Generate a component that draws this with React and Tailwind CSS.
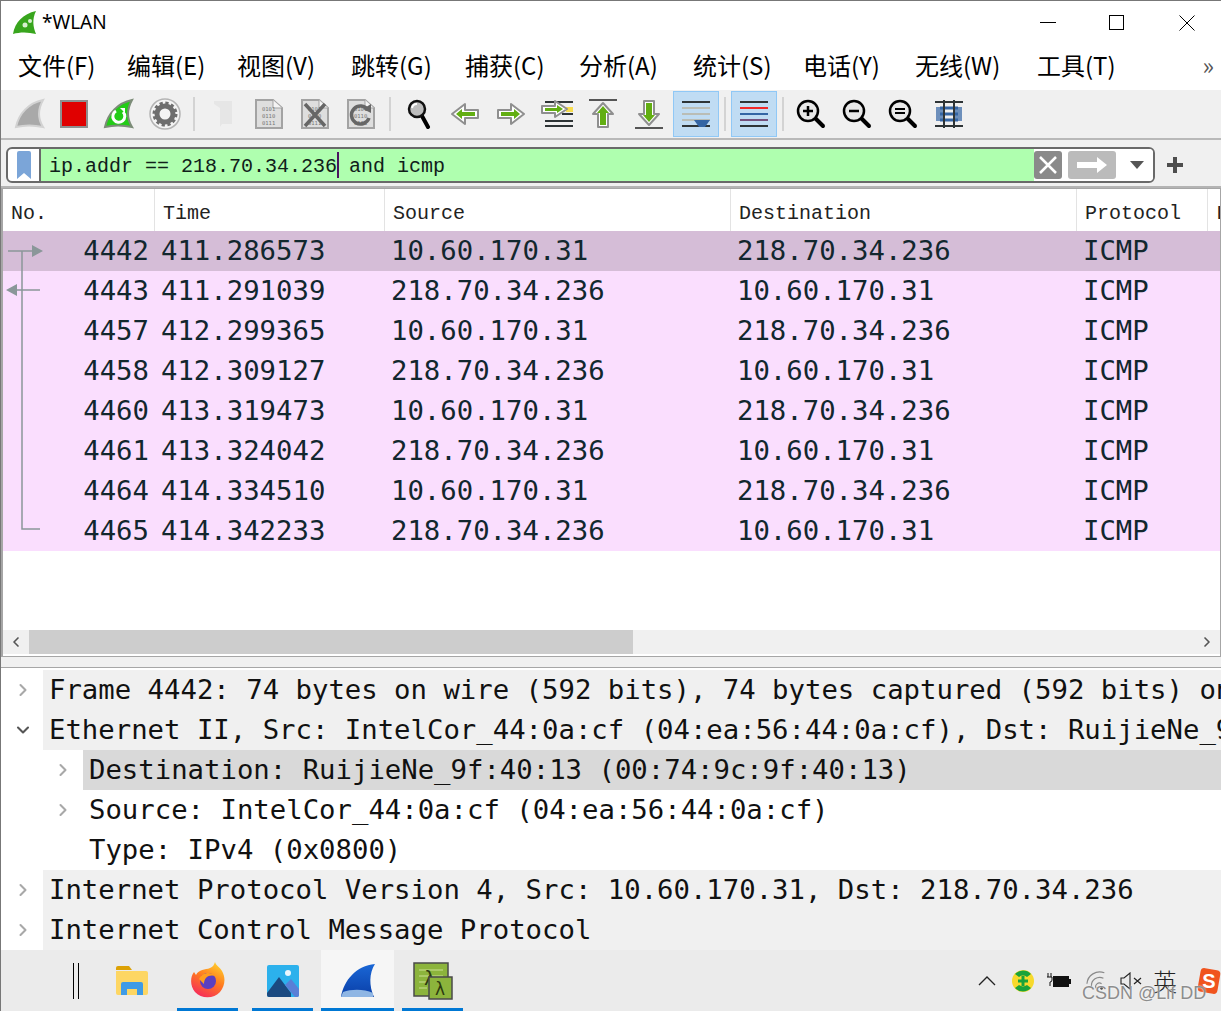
import { ChevronDown, ChevronLeft, ChevronRight } from "lucide-react";

const menus = [
  ["文件(F)", "w-[109px]"],
  ["编辑(E)", "w-[110px]"],
  ["视图(V)", "w-[114px]"],
  ["跳转(G)", "w-[114px]"],
  ["捕获(C)", "w-[114px]"],
  ["分析(A)", "w-[114px]"],
  ["统计(S)", "w-[110px]"],
  ["电话(Y)", "w-[112px]"],
  ["无线(W)", "w-[122px]"],
  ["工具(T)", "w-[80px]"],
];

const packets = [
  ["4442", "411.286573", "10.60.170.31", "218.70.34.236"],
  ["4443", "411.291039", "218.70.34.236", "10.60.170.31"],
  ["4457", "412.299365", "10.60.170.31", "218.70.34.236"],
  ["4458", "412.309127", "218.70.34.236", "10.60.170.31"],
  ["4460", "413.319473", "10.60.170.31", "218.70.34.236"],
  ["4461", "413.324042", "218.70.34.236", "10.60.170.31"],
  ["4464", "414.334510", "10.60.170.31", "218.70.34.236"],
  ["4465", "414.342233", "218.70.34.236", "10.60.170.31"],
];

const FIN = "M2 29 C5 15 15 5 29 2 C24 11 24 21 29 29 C20 27 10 27 2 29 Z";

function Fin({ fill, stroke, children }) {
  return (
    <svg width="32" height="32" viewBox="0 0 32 32">
      <path d={FIN} fill={fill} stroke={stroke} strokeWidth="2" />
      {children}
    </svg>
  );
}

function DataFile({ children }) {
  return (
    <svg width="30" height="32" viewBox="0 0 30 32">
      <path d="M2 2 H19 L28 10 V30 H2 Z" fill="#dedede" stroke="#a3a3a3" strokeWidth="2" />
      <path d="M19 2 V10 H28" fill="#f4f4f4" stroke="#a3a3a3" strokeWidth="1" />
      <text x="8" y="13" fontSize="5.5" fill="#777" fontFamily="DejaVu Sans Mono">0101</text>
      <text x="8" y="20" fontSize="5.5" fill="#777" fontFamily="DejaVu Sans Mono">0110</text>
      <text x="8" y="27" fontSize="5.5" fill="#777" fontFamily="DejaVu Sans Mono">0111</text>
      {children}
    </svg>
  );
}

function Arrow({ rotate = 0, size = 30 }) {
  return (
    <svg width={size} height={size} viewBox="0 0 30 30" style={{ transform: `rotate(${rotate}deg)` }}>
      <path d="M2 11 H15 V5 L28 15 L15 25 V19 H2 Z" fill="#fff" stroke="#8f8f8f" strokeWidth="2" strokeLinejoin="round" />
      <path d="M5 13 H18 V10 L24 15 L18 20 V17 H5 Z" fill="#62ae12" />
    </svg>
  );
}

function GoToIcon() {
  return (
    <svg width="34" height="32" viewBox="0 0 34 32">
      <rect x="5" y="3" width="28" height="2" fill="#2e3436" />
      <rect x="26" y="9" width="7" height="5" fill="#f7dc4d" />
      <rect x="22" y="15" width="11" height="2" fill="#2e3436" />
      <rect x="5" y="22" width="28" height="2" fill="#2e3436" />
      <rect x="5" y="27" width="28" height="2" fill="#2e3436" />
      <path d="M2 8 H15 V3 L27 11 L15 19 V15 H2 Z" fill="#fff" stroke="#8f8f8f" strokeWidth="2" strokeLinejoin="round" />
      <path d="M5 10 H17 V7 L23 11 L17 15 V13 H5 Z" fill="#62ae12" />
    </svg>
  );
}

function EdgeArrow({ up }) {
  return (
    <svg width="30" height="32" viewBox="0 0 30 32">
      <rect x="1" y={up ? 1 : 29} width="28" height="2" fill="#555" />
      <path
        d={up ? "M15 5 L25 16 H20 V29 H10 V16 H5 Z" : "M15 27 L25 16 H20 V3 H10 V16 H5 Z"}
        fill="#fff"
        stroke="#8f8f8f"
        strokeWidth="2"
        strokeLinejoin="round"
      />
      <path
        d={up ? "M15 8 L21 15 H18 V27 H12 V15 H9 Z" : "M15 24 L21 17 H18 V5 H12 V17 H9 Z"}
        fill="#62ae12"
      />
    </svg>
  );
}

function Lines({ children }) {
  return (
    <svg width="28" height="28" viewBox="0 0 28 28">
      {children}
    </svg>
  );
}

function Magnifier({ sign }) {
  return (
    <svg width="30" height="30" viewBox="0 0 30 30">
      <path d="M19 19 L27 27" stroke="#000" strokeWidth="4" strokeLinecap="round" />
      <circle cx="12" cy="12" r="10" fill="#e8e8e8" stroke="#000" strokeWidth="2.5" />
      {sign !== "normal" && <path d="M7 12 H17" stroke="#000" strokeWidth="2.5" />}
      {sign === "plus" && <path d="M12 7 V17" stroke="#000" strokeWidth="2.5" />}
      {sign === "normal" && <path d="M7 10 H17 M7 14 H17" stroke="#000" strokeWidth="2" />}
    </svg>
  );
}

function ToolButton({ children, className = "w-[46px]" }) {
  return <div className={`flex h-[46px] shrink-0 items-center justify-center ${className}`}>{children}</div>;
}

function Separator({ className = "w-3" }) {
  return (
    <div className={`flex h-[34px] shrink-0 items-center justify-center ${className}`}>
      <div className="h-full w-0.5 bg-[#d3d3d3]" />
    </div>
  );
}

function Toolbar() {
  return (
    <div className="flex h-[50px] items-center border-b-2 border-[#b9b9b9] bg-[#f0f0f0] pl-[7px]">
      <ToolButton className="w-11">
        <Fin fill="#a9a9a9" stroke="#d2d2d2" />
      </ToolButton>
      <ToolButton className="w-11">
        <div className="h-7 w-7 border-2 border-[#8f8f8f] bg-[#e00000]" />
      </ToolButton>
      <ToolButton>
        <Fin fill="#22cc16" stroke="#7c8c78">
          <path d="M20 14 a6 6 0 1 1 -7 -1" fill="none" stroke="#fff" strokeWidth="3" />
          <path d="M17 10 h5 v5 Z" fill="#fff" />
        </Fin>
      </ToolButton>
      <ToolButton>
        <svg width="32" height="32" viewBox="0 0 32 32">
          <circle cx="16" cy="16" r="15" fill="#f4f4f4" stroke="#b4b4b4" strokeWidth="1.5" />
          <circle cx="16" cy="16" r="8" fill="none" stroke="#6e6e6e" strokeWidth="5" />
          <circle cx="16" cy="16" r="11" fill="none" stroke="#6e6e6e" strokeWidth="3" strokeDasharray="3.2 2.56" />
        </svg>
      </ToolButton>
      <Separator />
      <ToolButton>
        <svg width="20" height="28" viewBox="0 0 20 28">
          <path d="M1 1 H19 V24 H9 L7 27 V8 L1 4 Z" fill="#e6e6e6" />
        </svg>
      </ToolButton>
      <ToolButton>
        <DataFile />
      </ToolButton>
      <ToolButton>
        <DataFile>
          <path d="M5 6 L25 28 M25 6 L5 28" stroke="#666" strokeWidth="3.5" />
        </DataFile>
      </ToolButton>
      <ToolButton>
        <DataFile>
          <path d="M22 12 a9 9 0 1 0 1 8" fill="none" stroke="#666" strokeWidth="3.5" />
          <path d="M17 11 L25 6 L25 15 Z" fill="#666" />
        </DataFile>
      </ToolButton>
      <Separator />
      <ToolButton>
        <svg width="24" height="30" viewBox="0 0 24 30">
          <path d="M15 17 L21 28" stroke="#000" strokeWidth="4" strokeLinecap="round" />
          <circle cx="10" cy="10" r="8" fill="#bdbdbd" stroke="#111" strokeWidth="2.5" />
          <path d="M5 9 a5 5 0 0 1 5 -4" fill="none" stroke="#fff" strokeWidth="2" />
        </svg>
      </ToolButton>
      <ToolButton>
        <Arrow rotate={180} />
      </ToolButton>
      <ToolButton>
        <Arrow />
      </ToolButton>
      <ToolButton>
        <GoToIcon />
      </ToolButton>
      <ToolButton>
        <EdgeArrow up />
      </ToolButton>
      <ToolButton>
        <EdgeArrow />
      </ToolButton>
      <ToolButton className="ml-px w-[46px] border border-[#90c8f6] bg-[#c0dcf3]">
        <Lines>
          <rect y="1" width="28" height="2" fill="#2e3436" />
          <rect y="7" width="28" height="2" fill="#babdb6" />
          <rect y="13" width="28" height="2" fill="#babdb6" />
          <rect y="19" width="28" height="2" fill="#babdb6" />
          <rect y="25" width="28" height="2" fill="#2e3436" />
          <path d="M12 20 H28 L23 27 H17 Z" fill="#3465a4" />
        </Lines>
      </ToolButton>
      <Separator className="w-3" />
      <ToolButton className="w-[46px] border border-[#90c8f6] bg-[#c0dcf3]">
        <Lines>
          <rect y="1" width="28" height="2" fill="#2e3436" />
          <rect y="7" width="28" height="2" fill="#ef2929" />
          <rect y="13" width="28" height="2" fill="#3465a4" />
          <rect y="19" width="28" height="2" fill="#75507b" />
          <rect y="25" width="28" height="2" fill="#2e3436" />
        </Lines>
      </ToolButton>
      <Separator className="w-[11px]" />
      <ToolButton>
        <Magnifier sign="plus" />
      </ToolButton>
      <ToolButton>
        <Magnifier sign="minus" />
      </ToolButton>
      <ToolButton>
        <Magnifier sign="normal" />
      </ToolButton>
      <ToolButton>
        <svg width="30" height="30" viewBox="0 0 30 30">
          <path d="M1 3 H29 M1 27 H29" stroke="#2e3436" strokeWidth="2" />
          <path d="M6 9 H24 M6 15 H24 M6 21 H24" stroke="#3465a4" strokeWidth="3" />
          <path d="M2 8 H9 V22 H2 Z M21 8 H28 V22 H21 Z" fill="#3465a4" opacity="0.7" />
          <path d="M10 1 V29 M20 1 V29" stroke="#2e3436" strokeWidth="2" />
        </svg>
      </ToolButton>
    </div>
  );
}

function FilterBar() {
  return (
    <div className="flex h-[48px] items-center border-b-2 border-[#b4b4b4] bg-[#f0f0f0] pt-1 pl-[5px]">
      <div className="flex h-9 w-[1149px] items-stretch overflow-hidden rounded-md border-2 border-[#696969] bg-white">
        <div className="flex w-[33px] items-center justify-center border-r-2 border-[#696969]">
          <svg width="16" height="29" viewBox="0 0 16 29">
            <path d="M1 2 Q1 0 3 0 H13 Q15 0 15 2 V28 L8 22 L1 28 Z" fill="#7ba5d8" />
          </svg>
        </div>
        <div className="flex flex-1 items-center bg-[#afffaf] pt-1 pl-2 font-['Liberation_Mono',monospace] text-[20px] whitespace-pre text-[#10201a]">
          <span>ip.addr == 218.70.34.236</span>
          <span className="-mt-1 h-[26px] w-0.5 bg-[#4b1460]" />
          <span className="-ml-0.5"> and icmp</span>
        </div>
        <div className="flex w-[119px] items-center bg-white">
          <div className="flex h-7 w-7 items-center justify-center rounded-[3px] bg-[#8a8a8a]">
            <svg width="22" height="22" viewBox="0 0 22 22">
              <path d="M3 3 L19 19 M19 3 L3 19" stroke="#fff" strokeWidth="2.5" />
            </svg>
          </div>
          <div className="ml-1.5 flex h-7 w-12 items-center justify-center rounded-[3px] bg-[#bbbbbb]">
            <svg width="34" height="20" viewBox="0 0 34 20">
              <path d="M2 7 H22 V2 L32 10 L22 18 V13 H2 Z" fill="#fff" />
            </svg>
          </div>
          <svg className="ml-3.5" width="14" height="8" viewBox="0 0 14 8">
            <path d="M0 0 H14 L7 8 Z" fill="#555" />
          </svg>
        </div>
      </div>
      <svg className="ml-[12px]" width="16" height="16" viewBox="0 0 16 16">
        <path d="M8 0 V16 M0 8 H16" stroke="#4d4d4d" strokeWidth="4" />
      </svg>
    </div>
  );
}

function PacketRow({ packet, selected }) {
  return (
    <div className={`flex h-10 items-center ${selected ? "bg-[#d5bdd7]" : "bg-[#fadefe]"}`}>
      <div className="w-[147px] shrink-0 pr-px text-right">{packet[0]}</div>
      <div className="w-[234px] shrink-0 pl-[11px]">{packet[1]}</div>
      <div className="w-[346px] shrink-0 pl-[7px]">{packet[2]}</div>
      <div className="w-[346px] shrink-0 pl-[7px]">{packet[3]}</div>
      <div className="pl-[7px]">ICMP</div>
    </div>
  );
}

function PacketList() {
  const headerCell = "flex h-full shrink-0 items-center border-r border-[#e3e3e3] pt-[7px] pl-2";
  return (
    <div className="relative flex h-[469px] flex-col border border-l-2 border-[#a6a6a6] bg-white">
      <div className="flex h-[42px] shrink-0 items-center overflow-hidden font-['Liberation_Mono',monospace] text-[20px] text-[#222]">
        <div className={`${headerCell} w-[152px]`}>No.</div>
        <div className={`${headerCell} w-[230px]`}>Time</div>
        <div className={`${headerCell} w-[346px]`}>Source</div>
        <div className={`${headerCell} w-[346px]`}>Destination</div>
        <div className={`${headerCell} w-[131px]`}>Protocol</div>
        <div className="shrink-0 pt-[7px] pl-2">L</div>
      </div>
      <div className="font-['DejaVu_Sans_Mono',monospace] text-[27.3px] whitespace-nowrap text-[#12272e]">
        {packets.map((packet, i) => (
          <PacketRow key={packet[0]} packet={packet} selected={i === 0} />
        ))}
      </div>
      {/* related packet markers */}
      <svg className="absolute top-[50px] left-[1px]" width="40" height="300" viewBox="0 0 40 300">
        <path d="M4 12 H28 M18 12 V290 H36 M10 51 H36" stroke="#8a9799" strokeWidth="1.5" fill="none" />
        <path d="M28 6 L39 12 L28 18 Z M13 45 L2 51 L13 57 Z" fill="#8a9799" />
      </svg>
      <div className="mt-auto mb-[2px] flex h-6 items-center bg-[#f0f0f0] text-[#555]">
        <div className="flex w-[26px] items-center justify-center">
          <ChevronLeft size={16} strokeWidth={2.5} />
        </div>
        <div className="h-full w-[604px] bg-[#cdcdcd]" />
        <div className="ml-auto flex w-[27px] items-center justify-center">
          <ChevronRight size={16} strokeWidth={2.5} />
        </div>
      </div>
    </div>
  );
}

function TreeRow({ indent, open, chevronClass = "text-[#a8a8a8]", rowClass, children }) {
  const Icon = open ? ChevronDown : ChevronRight;
  return (
    <div className={`flex h-10 ${indent ? "pl-10" : ""}`}>
      <div className={`flex w-[41px] shrink-0 items-center justify-center ${chevronClass}`}>
        {open !== undefined && <Icon size={20} strokeWidth={2.5} />}
      </div>
      <div className={`flex min-w-0 flex-1 items-center overflow-hidden whitespace-pre pl-[6px] ${rowClass}`}>
        {children}
      </div>
    </div>
  );
}

function Details() {
  return (
    <div className="flex h-[283px] flex-col overflow-hidden border-t border-[#a6a6a6] bg-white pt-[2px] pl-px font-['DejaVu_Sans_Mono',monospace] text-[27.3px] text-[#111]">
      <TreeRow open={false} rowClass="bg-[#f0f0f0]">
        Frame 4442: 74 bytes on wire (592 bits), 74 bytes captured (592 bits) on interface
      </TreeRow>
      <TreeRow open chevronClass="text-[#555]" rowClass="bg-[#f0f0f0]">
        Ethernet II, Src: IntelCor_44:0a:cf (04:ea:56:44:0a:cf), Dst: RuijieNe_9f:40:13 (00:74:9c:9f:40:13)
      </TreeRow>
      <TreeRow indent open={false} rowClass="bg-[#d9d9d9]">
        Destination: RuijieNe_9f:40:13 (00:74:9c:9f:40:13)
      </TreeRow>
      <TreeRow indent open={false} rowClass="bg-white">
        Source: IntelCor_44:0a:cf (04:ea:56:44:0a:cf)
      </TreeRow>
      <TreeRow indent rowClass="bg-white">
        Type: IPv4 (0x0800)
      </TreeRow>
      <TreeRow open={false} rowClass="bg-[#f0f0f0]">
        Internet Protocol Version 4, Src: 10.60.170.31, Dst: 218.70.34.236
      </TreeRow>
      <TreeRow open={false} rowClass="bg-[#f0f0f0]">
        Internet Control Message Protocol
      </TreeRow>
    </div>
  );
}

function TaskItem({ className, running = true, active, children }) {
  return (
    <div className={`relative flex h-full shrink-0 items-center justify-center ${active ? "bg-[#f6f6f6]" : ""} ${className}`}>
      {children}
      {running && <div className="absolute right-0 bottom-0 left-0 h-[3px] bg-[#0078d4]" />}
    </div>
  );
}

function Taskbar() {
  return (
    <div className="relative flex h-[61px] items-center bg-[#ebebeb] pl-[72px]">
      <div className="h-9 w-1.5 shrink-0 border-x border-black" />
      <TaskItem className="ml-[22px] w-[61px]" running={false}>
        <svg width="32" height="30" viewBox="0 0 32 30">
          <path d="M0 2 Q0 0 2 0 H13 L16 4 H0 Z" fill="#dca105" />
          <path d="M0 5 H30 Q32 5 32 7 V27 Q32 29 30 29 H2 Q0 29 0 27 Z" fill="#fdd663" />
          <path d="M5 29 V18 Q5 16 7 16 H25 Q27 16 27 18 V29 H21 V23 H11 V29 Z" fill="#3f9be6" />
        </svg>
      </TaskItem>
      <TaskItem className="ml-[15px] w-[61px]">
        <svg width="34" height="37" viewBox="0 0 34 37">
          <defs>
            <linearGradient id="fox" x1="0.7" y1="0" x2="0.2" y2="1">
              <stop offset="0" stopColor="#ffcb2c" />
              <stop offset="0.45" stopColor="#ff7a1f" />
              <stop offset="1" stopColor="#f5255f" />
            </linearGradient>
          </defs>
          <path d="M24 0 C25 4 29 5 31 9 C35 16 34 24 29 30 C23 37 10 37 4 30 C-1 24 -1 15 3 10 L5 13 C8 7 14 8 19 6 C22 5 23 3 24 0 Z" fill="url(#fox)" />
          <circle cx="17" cy="19" r="8" fill="#5b3fc0" />
          <path d="M8 17 C11 10 20 9 25 14 C18 12 13 15 13 22 Z" fill="#ff9d1e" />
        </svg>
      </TaskItem>
      <TaskItem className="ml-[14px] w-[61px]">
        <svg width="32" height="32" viewBox="0 0 32 32">
          <rect width="32" height="32" rx="2" fill="#2cb1ec" />
          <circle cx="21" cy="8" r="3" fill="#eaf6fd" />
          <path d="M0 28 L12 12 L24 28 V32 H2 Q0 32 0 30 Z" fill="#1b4a80" />
          <path d="M18 20 L24 14 L32 24 V30 Q32 32 30 32 H28 Z" fill="#5a7fd6" />
        </svg>
      </TaskItem>
      <TaskItem className="ml-2 w-[73px]" active>
        <svg width="36" height="36" viewBox="0 0 36 36">
          <defs>
            <linearGradient id="shark" x1="0" y1="0" x2="0" y2="1">
              <stop offset="0" stopColor="#1a67d6" />
              <stop offset="1" stopColor="#0a3fa8" />
            </linearGradient>
          </defs>
          <path d="M1 34 C4 17 16 3 35 1 C29 10 29 23 34 34 Z" fill="url(#shark)" />
          <path d="M3 29 C12 26 24 26 33 30 V34 H1 Z" fill="#8fb6e4" />
        </svg>
      </TaskItem>
      <TaskItem className="ml-2 w-[61px]">
        <svg width="40" height="38" viewBox="0 0 40 38">
          <rect x="1" y="1" width="34" height="33" fill="#8cb43c" stroke="#4a4a4a" strokeWidth="1.5" />
          <path d="M6 8 H30 M6 14 H30 M6 20 H14 M6 26 H14" stroke="#b5d175" strokeWidth="1.5" />
          <text x="11" y="23" fontSize="20" fill="#2c3a10" fontFamily="DejaVu Sans">λ</text>
          <rect x="16" y="15" width="23" height="22" fill="#8cb43c" stroke="#4a4a4a" strokeWidth="1.5" />
          <text x="22" y="33" fontSize="17" fill="#2c3a10" fontFamily="DejaVu Sans">λ</text>
        </svg>
      </TaskItem>

      <div className="ml-auto flex items-center">
        <svg width="18" height="10" viewBox="0 0 18 10">
          <path d="M1 9 L9 1 L17 9" fill="none" stroke="#222" strokeWidth="1.3" />
        </svg>
        <svg className="ml-[15px]" width="24" height="24" viewBox="0 0 24 24">
          <circle cx="12" cy="12" r="11" fill="#f7d92c" />
          <path d="M4 5 A11 11 0 0 1 20 5 L16 8 A7 7 0 0 0 8 8 Z M4 19 A11 11 0 0 0 20 19 L16 16 A7 7 0 0 1 8 16 Z" fill="#19a33a" />
          <path d="M12 7 V17 M7 12 H17" stroke="#19a33a" strokeWidth="3" />
        </svg>
        <svg className="ml-3" width="24" height="18" viewBox="0 0 24 18">
          <path d="M1 1 V5 M4 1 V5 M0 5 H5 V8 Q5 10 3 10 V14" fill="none" stroke="#111" strokeWidth="1" />
          <rect x="6" y="4" width="16" height="11" fill="#111" />
          <rect x="22" y="7" width="2" height="5" fill="#111" />
        </svg>
        <svg className="ml-[15px]" width="22" height="22" viewBox="0 0 24 22">
          <path d="M1 14 A14 14 0 0 1 20 2 M6 17 A9 9 0 0 1 19 8 M11 19 A4 4 0 0 1 17 14" fill="none" stroke="#8a8a8a" strokeWidth="1.3" />
          <circle cx="17" cy="19" r="1.5" fill="#333" />
        </svg>
        <svg className="ml-3" width="22" height="18" viewBox="0 0 22 18">
          <path d="M1 6 H4 L10 1 V17 L4 12 H1 Z" fill="none" stroke="#222" strokeWidth="1.1" />
          <path d="M14 6 L21 12 M21 6 L14 12" stroke="#222" strokeWidth="1.2" />
        </svg>
        <span className="ml-[11px] font-['Noto_Sans_CJK_SC',sans-serif] text-[24px] leading-none font-light text-[#222]">英</span>
        <svg className="ml-5" width="24" height="28" viewBox="0 0 24 28">
          <rect x="2" y="2" width="20" height="24" rx="4" fill="#f0541e" transform="rotate(10 12 14)" />
          <text x="12" y="21" fontSize="20" fontWeight="bold" textAnchor="middle" fill="#fff" fontFamily="Liberation Sans">S</text>
        </svg>
      </div>
      <span className="absolute top-[34px] left-[1081px] font-['Liberation_Sans',sans-serif] text-[18px] leading-none whitespace-nowrap text-[#8d8d8d] [text-shadow:0_0_2px_#ffffff]">
        CSDN @Lif DD
      </span>
    </div>
  );
}

export default function App() {
  return (
    <div className="h-[1011px] w-[1221px] overflow-hidden border-t border-l border-[#777] bg-white">
      <div className="flex h-[45px] items-center pb-0.5 pl-[11px]">
        <svg width="26" height="26" viewBox="0 0 26 26">
          <path d="M1 24 C3 12 11 4 24 1 C20 9 21 17 24 24 C16 22 8 22 1 24 Z" fill="#38a51d" />
          <circle cx="13" cy="15" r="2.5" fill="#d8f0d0" />
          <circle cx="18" cy="11" r="2" fill="#d8f0d0" />
        </svg>
        <span className="ml-[4px] font-['Noto_Sans',sans-serif] text-[19px] text-black">*WLAN</span>
        <div className="ml-auto flex h-full items-center pr-[26px]">
          <div className="h-px w-4 bg-black" />
          <div className="ml-[53px] h-[15px] w-[15px] border border-black" />
          <svg className="ml-[55px]" width="16" height="16" viewBox="0 0 16 16">
            <path d="M0.5 0.5 L15.5 15.5 M15.5 0.5 L0.5 15.5" stroke="#000" strokeWidth="1" />
          </svg>
        </div>
      </div>
      <div className="flex h-[44px] items-center pb-[6px] pl-[17px] font-['Noto_Sans_CJK_SC',sans-serif] text-[24px] leading-none text-black">
        {menus.map(([label, width]) => (
          <span key={label} className={`shrink-0 whitespace-nowrap ${width}`}>
            {label}
          </span>
        ))}
        <span className="ml-auto pr-[7px] text-[24px] text-[#555]">»</span>
      </div>
      <Toolbar />
      <FilterBar />
      <PacketList />
      <div className="h-[10px] bg-[#f0f0f0]" />
      <Details />
      <Taskbar />
    </div>
  );
}
